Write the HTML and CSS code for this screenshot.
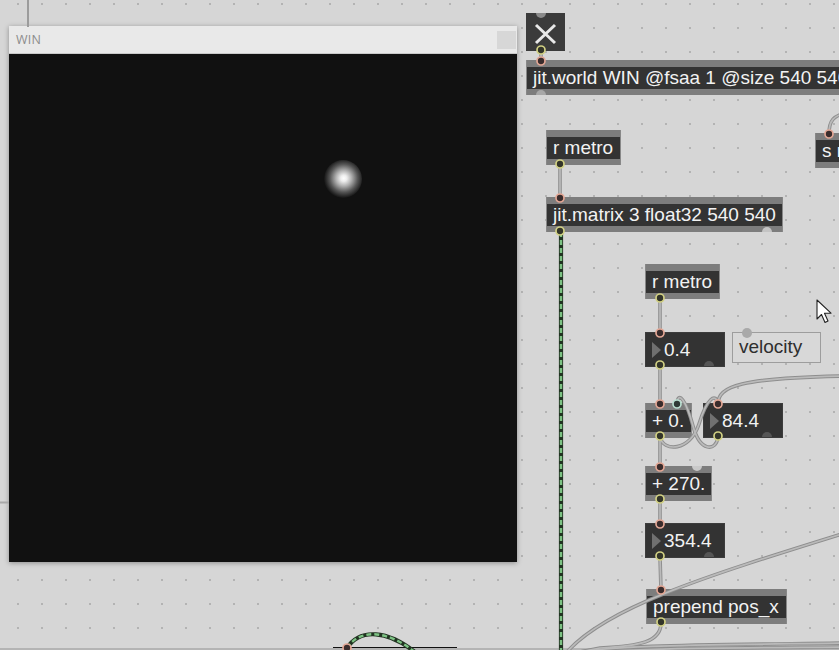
FILE: index.html
```html
<!DOCTYPE html>
<html>
<head>
<meta charset="utf-8">
<link rel="stylesheet" href="styles.css">
</head>
<body>
<div class="patcher">
  <div class="win">
    <div class="win-title"><span>WIN</span><div class="win-btn"></div></div>
    <div class="win-canvas"><div class="glow"></div></div>
  </div>

  <div class="obj toggle n-toggle">
    <svg width="39" height="38" viewBox="0 0 39 38"><path d="M10 12 L29 30 M29 12 L10 30" stroke="#e8e8e8" stroke-width="3" stroke-linecap="butt"/></svg>
  </div>
  <div class="obj box n-world"><span class="txt">jit.world WIN @fsaa 1 @size 540 540</span></div>
  <div class="obj box n-rmetro1"><span class="txt">r metro</span></div>
  <div class="obj box n-send"><span class="txt">s metro</span></div>
  <div class="obj box n-matrix"><span class="txt">jit.matrix 3 float32 540 540</span></div>
  <div class="obj box n-rmetro2"><span class="txt">r metro</span></div>
  <div class="obj num n-n04"><i class="tri"></i><span class="val">0.4</span></div>
  <div class="obj comment n-vel">velocity</div>
  <div class="obj box n-plus0"><span class="txt">+ 0.</span></div>
  <div class="obj num n-n844"><i class="tri"></i><span class="val">84.4</span></div>
  <div class="obj box n-plus270"><span class="txt">+ 270.</span></div>
  <div class="obj num n-n3544"><i class="tri"></i><span class="val">354.4</span></div>
  <div class="obj box n-prepend"><span class="txt">prepend pos_x</span></div>
  <div class="obj n-blackbar"></div>

  <svg class="cords" width="839" height="650" viewBox="0 0 839 650">
    <line x1="28" y1="0" x2="28" y2="27" stroke="#9c9c9c" stroke-width="2"/>
    <line x1="0" y1="502.5" x2="9" y2="502.5" stroke="#a8a8a8" stroke-width="2"/>
    <line x1="0" y1="649" x2="839" y2="649" stroke="#b4b4b4" stroke-width="2"/>
    <g fill="none" stroke="#8e8e8e" stroke-width="3.6" stroke-linecap="round">
      <path d="M541 51 L541 61"/>
      <path d="M560 164 L560 198"/>
      <path d="M660 298 L660 333"/>
      <path d="M660 366 L660 404"/>
      <path d="M660 437 L660 467"/>
      <path d="M660 500 L660 524"/>
      <path d="M660 557 L661 590"/>
      <path d="M660 437 C663 452 690 452 699 424 C707 398 716 392 718 404"/>
      <path d="M718 437 C716 452 700 452 693 426 C686 400 678 390 677 404"/>
      <path d="M718 404 C718 386 740 378 845 376"/>
      <path d="M661 623 C661 642 640 646 600 648 L575 653"/>
      <path d="M566 653 C605 608 700 578 845 533"/>
      <path d="M575 653 C610 645 700 645 845 643"/>
      <path d="M590 653 C630 648 720 648 845 647"/>
      <path d="M829 134 C829 120 834 116 845 113"/>
    </g>
    <g fill="none" stroke="#bababa" stroke-width="1.7" stroke-linecap="round">
      <path d="M541 51 L541 61"/>
      <path d="M560 164 L560 198"/>
      <path d="M660 298 L660 333"/>
      <path d="M660 366 L660 404"/>
      <path d="M660 437 L660 467"/>
      <path d="M660 500 L660 524"/>
      <path d="M660 557 L661 590"/>
      <path d="M660 437 C663 452 690 452 699 424 C707 398 716 392 718 404"/>
      <path d="M718 437 C716 452 700 452 693 426 C686 400 678 390 677 404"/>
      <path d="M718 404 C718 386 740 378 845 376"/>
      <path d="M661 623 C661 642 640 646 600 648 L575 653"/>
      <path d="M566 653 C605 608 700 578 845 533"/>
      <path d="M575 653 C610 645 700 645 845 643"/>
      <path d="M590 653 C630 648 720 648 845 647"/>
      <path d="M829 134 C829 120 834 116 845 113"/>
    </g>
    <g fill="none">
      <path d="M561 232 L561 652" stroke="#213321" stroke-width="4.2"/>
      <path d="M561 232 L561 652" stroke="#7cc283" stroke-width="2.4" stroke-dasharray="5 3"/>
      <path d="M347 648 C360 628 388 630 416 653" stroke="#213321" stroke-width="4.2"/>
      <path d="M347 648 C360 628 388 630 416 653" stroke="#7cc283" stroke-width="2.4" stroke-dasharray="5 3"/>
    </g>
    <g fill="#9a9a9a">
      <path d="M536 13 A5 5 0 0 0 546 13 Z" fill="#8a8a8a"/>
      <path d="M536 95 A5 5 0 0 1 546 95 Z" fill="#a8a8a8"/>
      <path d="M762 232 A5 5 0 0 1 772 232 Z" fill="#c4c4c4"/>
      <path d="M704 366 A5 5 0 0 1 714 366 Z" fill="#555"/>
      <path d="M762 437 A5 5 0 0 1 772 437 Z" fill="#555"/>
      <path d="M704 557 A5 5 0 0 1 714 557 Z" fill="#555"/>
      <path d="M692 466 A5 5 0 0 0 702 466 Z" fill="#c9c9c9"/>
      <circle cx="747" cy="333" r="5" fill="#a9a9a9"/>
    </g>
    <g stroke-width="1.7" fill="#3a2c2c">
      <circle cx="541" cy="61" r="4" stroke="#e3a795"/>
      <circle cx="560" cy="198" r="4" stroke="#e3a795"/>
      <circle cx="829" cy="134" r="4" stroke="#e3a795"/>
      <circle cx="660" cy="333" r="4" stroke="#e3a795"/>
      <circle cx="660" cy="404" r="4" stroke="#e3a795"/>
      <circle cx="718" cy="404" r="4" stroke="#e3a795"/>
      <circle cx="660" cy="467" r="4" stroke="#e3a795"/>
      <circle cx="660" cy="524" r="4" stroke="#e3a795"/>
      <circle cx="661" cy="590" r="4" stroke="#e3a795"/>
      <circle cx="347" cy="648" r="4" stroke="#e3a795"/>
      <circle cx="677" cy="404" r="4" stroke="#b9ded0" fill="#2f3a36"/>
    </g>
    <g stroke-width="1.7" fill="#33352a">
      <circle cx="541" cy="50" r="4" stroke="#d2d184"/>
      <circle cx="560" cy="164" r="4" stroke="#d2d184"/>
      <circle cx="560" cy="231" r="4" stroke="#d2d184"/>
      <circle cx="660" cy="298" r="4" stroke="#d2d184"/>
      <circle cx="660" cy="365" r="4" stroke="#d2d184"/>
      <circle cx="660" cy="436" r="4" stroke="#d2d184"/>
      <circle cx="718" cy="436" r="4" stroke="#d2d184"/>
      <circle cx="660" cy="499" r="4" stroke="#d2d184"/>
      <circle cx="660" cy="556" r="4" stroke="#d2d184"/>
      <circle cx="661" cy="622" r="4" stroke="#d2d184"/>
    </g>
    <path class="cursor" d="M817 300 L817 319 L821.5 314.5 L825 322.5 L828 321 L824.5 313.2 L831 313.2 Z" fill="#ffffff" stroke="#222" stroke-width="1.1" stroke-linejoin="round"/>
  </svg>
</div>
</body>
</html>
```

FILE: styles.css
```css
html, body {
  margin: 0;
  padding: 0;
  background: #d6d6d6;
}

.patcher {
  position: relative;
  width: 839px;
  height: 650px;
  overflow: hidden;
  background-color: #d6d6d6;
  background-image: radial-gradient(circle, #b3b3b3 0.9px, transparent 1.3px);
  background-size: 24px 24px;
  background-position: 6px -8px;
  font-family: "Liberation Sans", Arial, sans-serif;
}

/* floating window */
.win {
  position: absolute;
  left: 9px;
  top: 26px;
  width: 508px;
  height: 536px;
  display: flex;
  flex-direction: column;
  box-shadow: 0 1px 5px rgba(0, 0, 0, 0.35);
}

.win-title {
  height: 27px;
  background: #e9e9e9;
  border-bottom: 1px solid #c9c9c9;
  display: flex;
  align-items: center;
  justify-content: space-between;
  padding: 0 1px 0 7px;
}

.win-title span {
  font-family: "Open Sans", "Liberation Sans", sans-serif;
  font-size: 12.5px;
  color: #8c8c8c;
  letter-spacing: 0.2px;
}

.win-btn {
  width: 19px;
  height: 18px;
  background: #d7d7d7;
  margin-top: 1px;
}

.win-canvas {
  flex: 1;
  background: #111111;
  position: relative;
}

.glow {
  position: absolute;
  left: 315px;
  top: 106px;
  width: 38px;
  height: 38px;
  border-radius: 50%;
  background: radial-gradient(circle at 52% 48%, #ffffff 0, #eeeeee 11%, #b0b0b0 28%, #555 50%, #222 66%, rgba(17,17,17,0) 72%);
}

/* patch objects */
.obj {
  position: absolute;
  box-sizing: border-box;
}

.box {
  background: #7d7d7d;
  padding: 7px 0 6px;
  height: 35px;
  border: 1px solid #888;
  border-width: 0 1px;
  overflow: hidden;
}

.txt {
  display: block;
  height: 22px;
  line-height: 22px;
  background: #333333;
  color: #f2f2f2;
  font-size: 19px;
  padding-left: 6px;
  white-space: nowrap;
  overflow: hidden;
}

.toggle {
  background: #3b3b3b;
  width: 39px;
  height: 38px;
}

.toggle svg {
  display: block;
}

.num {
  background: #333333;
  height: 35px;
  display: flex;
  align-items: center;
  border: 1px solid #3c3c3c;
}

.tri {
  display: block;
  width: 0;
  height: 0;
  border-left: 9px solid #707070;
  border-top: 8px solid transparent;
  border-bottom: 8px solid transparent;
  margin-left: 6px;
  margin-right: 3px;
}

.val {
  color: #f2f2f2;
  font-size: 19px;
  line-height: 22px;
}

.comment {
  border: 1.5px solid #9d9d9d;
  background: #d8d8d8;
  color: #2e2e2e;
  font-size: 19px;
  line-height: 28px;
  padding-left: 6px;
  white-space: nowrap;
}

.n-toggle { left: 526px; top: 13px; }
.n-world { left: 526px; top: 60px; width: 330px; }
.n-rmetro1 { left: 546px; top: 130px; width: 75px; }
.n-send { left: 815px; top: 133px; width: 60px; }
.n-matrix { left: 546px; top: 197px; width: 237px; }
.n-rmetro2 { left: 645px; top: 264px; width: 75px; }
.n-n04 { left: 645px; top: 332px; width: 80px; }
.n-vel { left: 732px; top: 332px; width: 89px; height: 31px; }
.n-plus0 { left: 645px; top: 403px; width: 47px; }
.n-n844 { left: 703px; top: 403px; width: 80px; }
.n-plus270 { left: 645px; top: 466px; width: 67px; }
.n-n3544 { left: 645px; top: 523px; width: 80px; }
.n-prepend { left: 646px; top: 589px; width: 141px; }
.n-blackbar { left: 333px; top: 647px; width: 124px; height: 6px; background: #111; }

.cords {
  position: absolute;
  left: 0;
  top: 0;
  pointer-events: none;
}
```
